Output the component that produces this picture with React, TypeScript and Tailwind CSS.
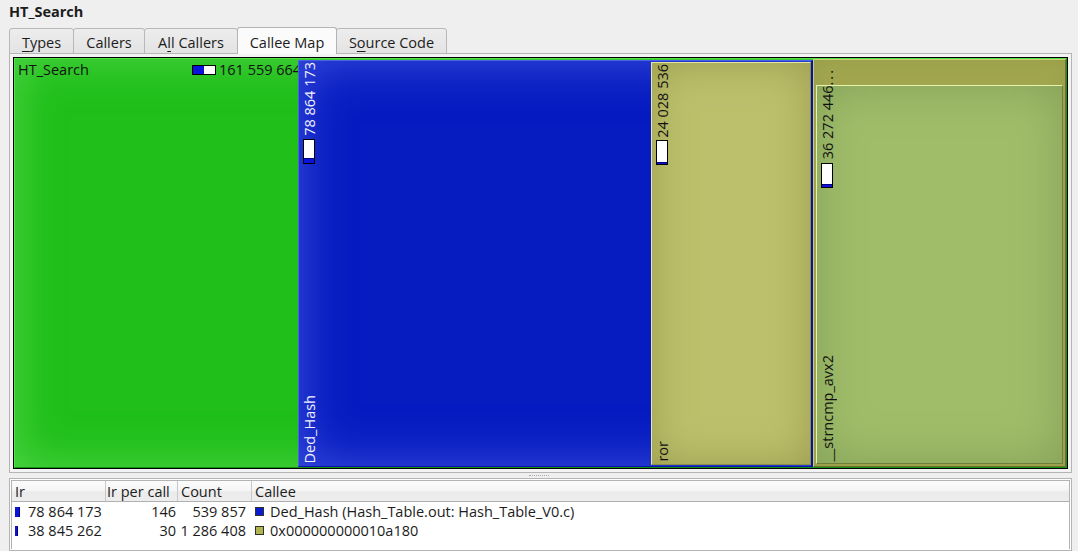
import React from 'react';

const vtext = '[writing-mode:vertical-rl] rotate-180 whitespace-nowrap leading-[14px]';

function CostBar({ fill }: { fill: number }) {
  return (
    <div className="w-[12px] h-[25px] border border-black bg-white flex flex-col justify-end shrink-0">
      <div className="bg-[#0a14d8] border-t border-[#000080]" style={{ height: fill }} />
    </div>
  );
}

const U = ({ c }: { c: string }) => <span className="underline underline-offset-[3px]">{c}</span>;

const tabs = [
  { id: 'types', w: 'w-[65px]', label: <><U c="T" />ypes</> },
  { id: 'callers', w: 'w-[72px]', label: <>Callers</> },
  { id: 'all', w: 'w-[94px]', label: <>A<U c="l" />l Callers</> },
  { id: 'map', w: 'w-[100px]', label: <>Callee Map</>, active: true },
  { id: 'src', w: 'w-[111px]', label: <>S<U c="o" />urce Code</> },
];

const rows = [
  { bar: 'w-[5px]', ir: '78 864 173', per: '146', count: '539 857', sq: 'bg-[#0a1ad0]', callee: 'Ded_Hash (Hash_Table.out: Hash_Table_V0.c)' },
  { bar: 'w-[3px]', ir: '38 845 262', per: '30', count: '1 286 408', sq: 'bg-[#b0b44e]', callee: '0x000000000010a180' },
];

function TreeMap() {
  return (
    <div className="h-full border border-black">
      <div className="h-full flex border border-t-[#55e248] border-l-[#55e248] border-b-[#149214] border-r-[#149214] bg-[#20bf1a] shadow-[inset_0_0_46px_rgba(80,214,72,1)]">
        {/* HT_Search self area */}
        <div className="flex-1 min-w-0 overflow-hidden">
          <div className="flex items-center pl-[3px] pt-[2px] whitespace-nowrap text-[#111]">
            <span className="w-[174px] shrink-0">HT_Search</span>
            <div className="w-[24px] h-[10px] border border-black bg-white flex shrink-0">
              <div className="w-[11px] bg-[#0a14d8]" />
            </div>
            <span className="ml-[3px]">161 559 664</span>
          </div>
        </div>

        {/* Ded_Hash */}
        <div className="w-[515px] mt-[1px] flex border border-r-2 border-t-[#4a62e6] border-l-[#4a62e6] border-b-[#0612a8] border-r-[#0612a8] bg-[#061bc0] shadow-[inset_0_0_52px_rgba(62,80,222,1)]">
          <div className="flex-1 flex flex-col items-start pl-[4px] pt-px pb-[3px] text-[#f2f2ff]">
            <div className={vtext}>78 864 173</div>
            <div className="mt-[3px]"><CostBar fill={5} /></div>
            <div className={`${vtext} mt-auto`}>Ded_Hash</div>
          </div>
          {/* ror */}
          <div className="w-[160px] my-px flex flex-col items-start pl-[4px] pt-px pb-[2px] text-[#111] bg-[#bcbf6b] border border-t-[#e2e8a2] border-l-[#e2e8a2] border-b-[#8c8e44] border-r-[#8c8e44] shadow-[inset_0_0_40px_rgba(156,158,80,1)]">
            <div className={vtext}>24 028 536</div>
            <div className="mt-[2px]"><CostBar fill={2} /></div>
            <div className={`${vtext} mt-auto`}>ror</div>
          </div>
        </div>

        {/* 0x000000000010a180 */}
        <div className="w-[253px] flex flex-col pt-[25px] px-[2px] pb-[2px] bg-[#a1a64f] border border-t-[#c7ce78] border-l-[#c7ce78] border-b-[#6c7130] border-r-[#6c7130] shadow-[inset_0_0_20px_rgba(150,156,70,0.8)]">
          <div className="flex-1 flex flex-col items-start pl-[4px] pb-[2px] text-[#111] bg-[#a0bd6a] border border-t-[#e6f2ae] border-l-[#e6f2ae] border-b-[#6f7e3c] border-r-[#6f7e3c] shadow-[inset_0_0_48px_rgba(132,160,88,1)]">
            <div className={`${vtext} -mt-[18px]`}>
              36 272 446<span className="tracking-[2px]">...</span>
            </div>
            <div className="mt-[4px]"><CostBar fill={3} /></div>
            <div className={`${vtext} mt-auto`}>__strncmp_avx2</div>
          </div>
        </div>
      </div>
    </div>
  );
}

export default function App() {
  return (
    <div className="w-[1078px] h-[551px] overflow-hidden bg-[#efefef] flex flex-col text-[14.5px] leading-[17px] text-[#1c1c1c] font-['Open_Sans','Noto_Sans',sans-serif]">
      <div className="h-[27px] shrink-0 pl-[9px] pt-[3px] font-bold">HT_Search</div>

      <div className="h-[27px] shrink-0 -mb-px relative z-10 flex items-end pl-[9px]">
        {tabs.map((t, i) => (
          <div
            key={t.id}
            className={
              t.active
                ? `${t.w} h-[27px] -ml-px relative z-10 flex items-center justify-center pt-[2px] rounded-t-[3px] border border-b-0 border-[#b4b4b4] bg-[#fbfbfb]`
                : `${t.w} h-[26px] ${i === 0 ? '' : '-ml-px'} flex items-center justify-center pt-[2px] rounded-t-[3px] border border-[#b8b8b8] bg-[linear-gradient(#ededed,#e3e3e3)]`
            }
          >
            {t.label}
          </div>
        ))}
      </div>

      <div className="h-[420px] shrink-0 ml-[9px] mr-[6px] border border-[#b4b4b4] bg-[#f3f3f3] p-[3px]">
        <TreeMap />
      </div>

      <div className="h-[5px] shrink-0 flex items-center justify-center">
        <div className="w-[20px] border-t border-dotted border-[#a8a8a8]" />
      </div>

      <div className="flex-1 min-h-0 ml-[9px] mr-[6px] border border-[#b4b4b4] bg-white p-px">
        <div className="h-full border border-b-0 border-[#b4b4b4]">
          <div className="h-[21px] flex border-b border-[#b0b0b0] bg-[linear-gradient(#fbfbfb,#f6f6f6_45%,#ebebeb_55%,#ededed)]">
            <div className="w-[94px] pl-[3px] border-r border-[#c8c8c8] flex items-center">Ir</div>
            <div className="w-[72px] pl-[1px] border-r border-[#c8c8c8] flex items-center">Ir per call</div>
            <div className="w-[74px] pl-[3px] border-r border-[#c8c8c8] flex items-center">Count</div>
            <div className="flex-1 pl-[3px] flex items-center">Callee</div>
          </div>
          {rows.map((r) => (
            <div key={r.ir} className="h-[19px] flex items-center">
              <div className="w-[94px] pl-[3px] flex items-center">
                <div className={`${r.bar} h-[10px] bg-[#0a14d8] border-r border-[#000070]`} />
                <span className={r.bar === 'w-[5px]' ? 'ml-[8px]' : 'ml-[10px]'}>{r.ir}</span>
              </div>
              <div className="w-[72px] pr-[2px] text-right">{r.per}</div>
              <div className="w-[74px] pr-[6px] text-right">{r.count}</div>
              <div className="flex-1 flex items-center pl-[3px]">
                <div className={`${r.sq} w-[9px] h-[9px] border border-[#303030]`} />
                <span className="ml-[6px] whitespace-nowrap">{r.callee}</span>
              </div>
            </div>
          ))}
        </div>
      </div>
    </div>
  );
}
